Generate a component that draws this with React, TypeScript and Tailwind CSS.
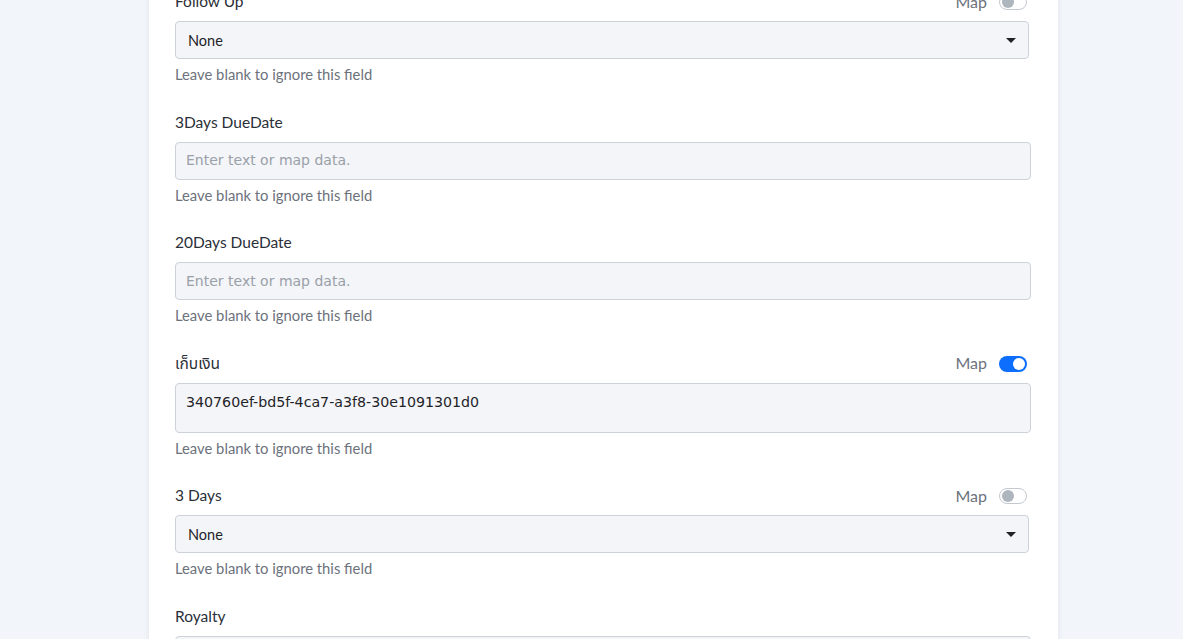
import React from 'react';

type Field = {
  label: string;
  kind: 'select' | 'text' | 'textarea';
  value?: string;
  map?: 'on' | 'off';
};

const fields: Field[] = [
  { label: 'Follow Up', kind: 'select', value: 'None', map: 'off' },
  { label: '3Days DueDate', kind: 'text' },
  { label: '20Days DueDate', kind: 'text' },
  { label: 'เก็บเงิน', kind: 'textarea', value: '340760ef-bd5f-4ca7-a3f8-30e1091301d0', map: 'on' },
  { label: '3 Days', kind: 'select', value: 'None', map: 'off' },
  { label: 'Royalty', kind: 'text' },
];

function Toggle({ on }: { on: boolean }) {
  return on ? (
    <span className="flex h-[16px] w-[28px] items-center justify-end rounded-full bg-[#0d6efd] pr-[2px]">
      <span className="h-[12px] w-[12px] rounded-full bg-white" />
    </span>
  ) : (
    <span className="flex h-[16px] w-[28px] items-center rounded-full border border-[#c4c9d0] bg-white pl-[2px]">
      <span className="h-[12px] w-[12px] rounded-full bg-[#adb5bd]" />
    </span>
  );
}

function Caret() {
  return (
    <svg width="10" height="5" viewBox="0 0 10 5" className="shrink-0">
      <path d="M0 0h10L5 5z" fill="#1f2328" />
    </svg>
  );
}

function FieldRow({ f }: { f: Field }) {
  return (
    <div className="mb-[27.5px]">
      <div className="flex h-[22px] items-center justify-between pr-[4px]">
        <span className="text-[15.5px] text-[#2b2f38] font-['Lato','Noto_Sans_Thai','Noto_Sans',sans-serif]">{f.label}</span>
        {f.map && (
          <span className="flex items-center gap-[12px]">
            <span className="-mt-[1px] text-[16px] text-[#6c727c] font-['Lato',sans-serif]">Map</span>
            <Toggle on={f.map === 'on'} />
          </span>
        )}
      </div>
      <div className="mt-[8px]">
        {f.kind === 'select' && (
          <div className="mr-[2px] flex h-[38px] items-center justify-between rounded-[4px] border border-[#cdd2d9] bg-[#f3f5f8] pl-[12px] pr-[12px]">
            <span className="mt-[1px] text-[14.5px] text-[#1f2328] font-['Lato',sans-serif]">{f.value}</span>
            <Caret />
          </div>
        )}
        {f.kind === 'text' && (
          <div className="flex h-[38px] items-center rounded-[4px] border border-[#cdd2d9] bg-[#f3f5f8] px-[10px]">
            <span className="text-[14px] text-[#9aa0a8] font-['DejaVu_Sans',sans-serif]">Enter text or map data.</span>
          </div>
        )}
        {f.kind === 'textarea' && (
          <div className="h-[50px] rounded-[4px] border border-[#cdd2d9] bg-[#f3f5f8] px-[10px] pt-[5px]">
            <span className="text-[14.2px] leading-[20px] text-[#1f2328] font-['DejaVu_Sans',sans-serif]">{f.value}</span>
          </div>
        )}
      </div>
      <div className="mt-[5px] h-[20px] text-[14.8px] leading-[20px] text-[#6c727c] font-['Lato',sans-serif]">
        Leave blank to ignore this field
      </div>
    </div>
  );
}

export default function App() {
  return (
    <div className="h-[639px] w-full overflow-hidden bg-[#f2f5f9]">
      <div className="-mt-[9px] ml-[149px] min-h-[720px] w-[909px] bg-white px-[26px] pr-[27px] shadow-[0_0_6px_rgba(30,40,60,0.08)]">
        {fields.map((f) => (
          <FieldRow key={f.label} f={f} />
        ))}
      </div>
    </div>
  );
}
